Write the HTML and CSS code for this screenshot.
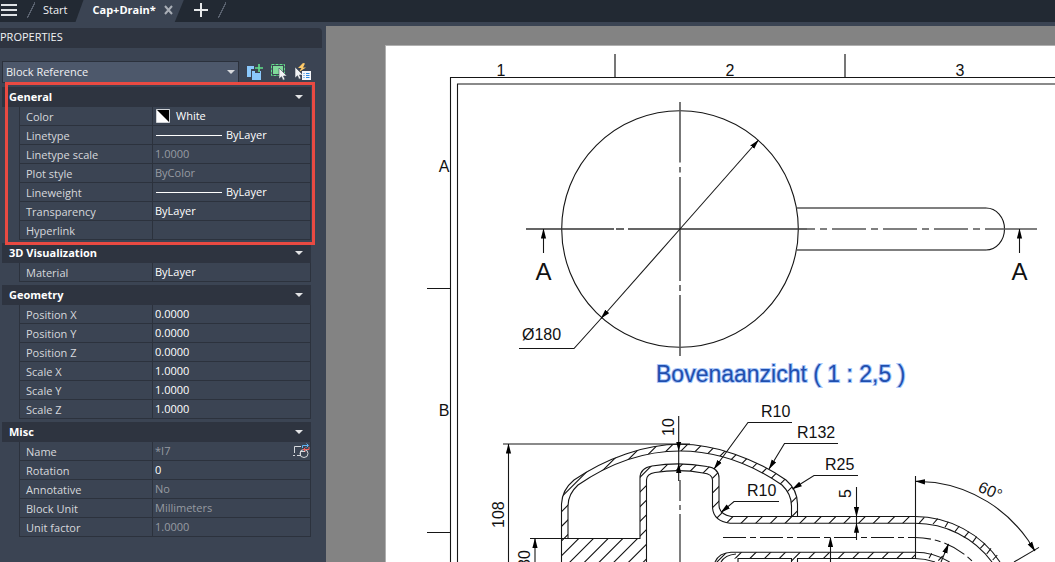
FILE: index.html
```html
<!DOCTYPE html>
<html lang="en">
<head>
<meta charset="utf-8">
<title>Cap+Drain</title>
<link rel="stylesheet" href="styles.css">
</head>
<body>
<header class="tabbar">
  <button class="menu-btn" aria-label="Menu"><svg width="17" height="14" viewBox="0 0 17 14"><path d="M1 2h16M1 7h16M1 12h16" stroke="#dfe2e6" stroke-width="2"/></svg></button>
  <span class="slash"></span>
  <button class="tab">Start</button>
  <div class="tab-active">
    <button class="tab-name">Cap+Drain*</button>
    <button class="tab-close" aria-label="Close tab"><svg width="10" height="10" viewBox="0 0 10 10"><path d="M1 1l7 8M8 1l-7 8" stroke="#a9aeb6" stroke-width="2"/></svg></button>
  </div>
  <button class="tab-add" aria-label="New tab"><svg width="14" height="14" viewBox="0 0 14 14"><path d="M0 7h14M7 0v14" stroke="#e6e8ea" stroke-width="2"/></svg></button>
  <span class="slash"></span>
</header>
<main class="workspace">
  <aside class="panel">
    <h1 class="panel-title">PROPERTIES</h1>
    <div class="toolbar">
      <div class="picker">
        <select class="picker-select" aria-label="Object type"><option>Block Reference</option></select>
        <svg class="picker-arrow" width="8" height="4" viewBox="0 0 8 4"><path d="M0 0h8l-4 4z" fill="#d8dadd"/></svg>
      </div>
      <button class="tool" aria-label="Toggle PICKADD"><svg width="18" height="18" viewBox="0 0 18 18"><path d="M1 3h7v3H5v8H1z" fill="#8ac8fb"/><path d="M6 8h3v2h5v-2h1v9H6z" fill="#8ac8fb"/><path d="M9 5h8M13 1v8" stroke="#62de8b" stroke-width="1.6"/></svg></button>
      <button class="tool" aria-label="Select objects"><svg width="18" height="18" viewBox="0 0 18 18"><path d="M1.500 1.500h13v11h-13z" fill="none" stroke="#62de8b" stroke-dasharray="3 1"/><path d="M3 3h10v8H3z" fill="#80d99a"/><path d="M9 5v11l2.500-2.300 1.500 3.500 2-.8-1.500-3.400H17z" fill="#f2f3f5" stroke="#3b4453" stroke-width=".6"/></svg></button>
      <button class="tool" aria-label="Quick select"><svg width="18" height="18" viewBox="0 0 18 18"><path d="M9 0L4 5h3.500L5 9l7-4.500H9l2-4z" fill="#ffca68"/><path d="M1 4v11l2.500-2.300 1.500 3.500 2-.8-1.500-3.400H9z" fill="#f2f3f5" stroke="#3b4453" stroke-width=".6"/><path d="M8 8h9v9H8z" fill="#f5f6f8"/><path d="M9.500 10.500h1M9.500 12.500h1M9.500 14.500h1M12 10.500h3.500M12 12.500h3.500M12 14.500h3.500" stroke="#2d8ae0"/></svg></button>
    </div>

    <section class="group highlighted">
      <h2 class="group-head"><button class="group-btn">General<svg width="8" height="4" viewBox="0 0 8 4"><path d="M0 0h8l-4 4z" fill="#e3e4e6"/></svg></button></h2>
      <table class="grid">
        <tr><th scope="row">Color</th><td><button class="value"><svg class="swatch" width="14" height="14" viewBox="0 0 14 14"><path d="M.5.500h13v13H.5z" fill="#fff" stroke="#cfd2d6"/><path d="M1 1h12v12z" fill="#000"/></svg>White</button></td></tr>
        <tr><th scope="row">Linetype</th><td><button class="value"><span class="stroke"></span>ByLayer</button></td></tr>
        <tr><th scope="row"><label for="lts">Linetype scale</label></th><td><input id="lts" class="value" value="1.0000" disabled></td></tr>
        <tr><th scope="row"><label for="plot">Plot style</label></th><td><input id="plot" class="value" value="ByColor" disabled></td></tr>
        <tr><th scope="row">Lineweight</th><td><button class="value"><span class="stroke"></span>ByLayer</button></td></tr>
        <tr><th scope="row"><label for="transp">Transparency</label></th><td><input id="transp" class="value" value="ByLayer"></td></tr>
        <tr><th scope="row"><label for="link">Hyperlink</label></th><td><input id="link" class="value" value=""></td></tr>
      </table>
    </section>

    <section class="group">
      <h2 class="group-head"><button class="group-btn">3D Visualization<svg width="8" height="4" viewBox="0 0 8 4"><path d="M0 0h8l-4 4z" fill="#e3e4e6"/></svg></button></h2>
      <table class="grid">
        <tr><th scope="row"><label for="mat">Material</label></th><td><select id="mat" class="value"><option>ByLayer</option></select></td></tr>
      </table>
    </section>

    <section class="group">
      <h2 class="group-head"><button class="group-btn">Geometry<svg width="8" height="4" viewBox="0 0 8 4"><path d="M0 0h8l-4 4z" fill="#e3e4e6"/></svg></button></h2>
      <table class="grid">
        <tr><th scope="row"><label for="px">Position X</label></th><td><input id="px" class="value" value="0.0000"></td></tr>
        <tr><th scope="row"><label for="py">Position Y</label></th><td><input id="py" class="value" value="0.0000"></td></tr>
        <tr><th scope="row"><label for="pz">Position Z</label></th><td><input id="pz" class="value" value="0.0000"></td></tr>
        <tr><th scope="row"><label for="sx">Scale X</label></th><td><input id="sx" class="value" value="1.0000"></td></tr>
        <tr><th scope="row"><label for="sy">Scale Y</label></th><td><input id="sy" class="value" value="1.0000"></td></tr>
        <tr><th scope="row"><label for="sz">Scale Z</label></th><td><input id="sz" class="value" value="1.0000"></td></tr>
      </table>
    </section>

    <section class="group">
      <h2 class="group-head"><button class="group-btn">Misc<svg width="8" height="4" viewBox="0 0 8 4"><path d="M0 0h8l-4 4z" fill="#e3e4e6"/></svg></button></h2>
      <table class="grid">
        <tr><th scope="row"><label for="nm">Name</label></th><td><div class="with-action"><input id="nm" class="value" value="*I7" disabled><button class="action" aria-label="Replace block"><svg width="17" height="16" viewBox="0 0 17 16"><path d="M8 3.500H1.500V10M0 12.500h2M4 12.500h4" fill="none" stroke="#d5d8dc"/><circle cx="11" cy="10.500" r="4" fill="none" stroke="#d5d8dc"/><path d="M7.500 12.500V8.500h4.500" fill="none" stroke="#d5d8dc"/><path d="M9.500 5V2.500H15M13.500.5l2 2-2 2" fill="none" stroke="#5fb4f2"/><path d="M16 4v2.500h-5.500M12.500 4.500l-2 2 2 2" fill="none" stroke="#f0605c"/></svg></button></div></td></tr>
        <tr><th scope="row"><label for="rot">Rotation</label></th><td><input id="rot" class="value" value="0"></td></tr>
        <tr><th scope="row"><label for="ann">Annotative</label></th><td><input id="ann" class="value" value="No" disabled></td></tr>
        <tr><th scope="row"><label for="bu">Block Unit</label></th><td><input id="bu" class="value" value="Millimeters" disabled></td></tr>
        <tr><th scope="row"><label for="uf">Unit factor</label></th><td><input id="uf" class="value" value="1.0000" disabled></td></tr>
      </table>
    </section>
  </aside>

  <div class="canvas">
    <div class="paper">
      <svg class="drawing" viewBox="386 46 669 516" preserveAspectRatio="xMinYMin slice">
        <defs>
          <clipPath id="walls">
            <path clip-rule="evenodd" d="M561.500 539V504Q562 490 574 480C606 458 645 444.300 680 444.300S754 458 786 480Q797.500 490 797.500 504V516.500H791.500V506Q791.500 494 782 485C750 463 715 451 680 451S610 463 578 485Q568 494 568 506V539z"/>
            <path d="M640 538.500V478Q640 468 652 466Q680 461.500 707 466.500Q719 468 719 478V505Q719 514 731 516.500H915V523.300H730Q712.500 521 712.500 507V479Q712 474 703 473Q680 468.500 655 472.500Q646.500 474 646.500 480V570H561.500V538.500z"/>
            <path d="M715 562Q718 553 731 552.300H915V558.500H797.500V570H791.500V558.500H738Q728 558 721 564z"/>
          </clipPath>
          <marker id="arrow" orient="auto" markerUnits="userSpaceOnUse" markerWidth="10" markerHeight="6" refX="9.500" refY="3" viewBox="0 0 10 6"><path d="M10 3L0 .4v5.200z" fill="#000"/></marker>
        </defs>

        <!-- sheet frame and zone ticks -->
        <g class="ln">
          <path d="M1060 77.500H450.500V570M1060 84H457.500V570"/>
          <path d="M427 288.500h23M427 532.500h23"/>
          <path class="soft" d="M615 54v23M845 54v23"/>
        </g>
        <g class="txt mid">
          <text x="501" y="76">1</text><text x="730" y="76">2</text><text x="960" y="76">3</text>
          <text x="444" y="172">A</text><text x="444" y="416">B</text>
        </g>

        <!-- top view -->
        <g class="ln">
          <circle cx="680" cy="229" r="118.300"/>
          <path class="soft" d="M796.500 208H986M796.500 250H986"/>
          <path d="M986 208a18.500 21 0 0 1 0 42"/>
          <path class="soft" d="M680 102v60.500M680 167v5.500M680 177v104M680 285v6M680 295v61"/>
          <path class="soft dark" d="M526 229h88M616 229h8M628 229h179"/>
          <path class="soft" d="M807 229h8M820 229h7M832 229h34M871 229h7M883 229h34M922 229h7M934 229h34M973 229h7M985 229h52"/>
          <path d="M519 348.500h55L601.500 318"/>
          <path d="M680 229L758.500 140" marker-end="url(#arrow)"/>
          <path d="M680 229L601 318.500" marker-end="url(#arrow)"/>
          <path d="M543.500 253V229" marker-end="url(#arrow)"/>
          <path d="M1019.500 253V229" marker-end="url(#arrow)"/>
        </g>
        <g class="txt"><text x="522" y="340">Ø180</text></g>
        <g class="txt mid big"><text x="543.500" y="280">A</text><text x="1019.500" y="280">A</text></g>
        <text class="view-title" x="656" y="382">Bovenaanzicht ( 1 : 2,5 )</text>

        <!-- section view: hatched walls -->
        <g clip-path="url(#walls)">
          <path d="M499.450 499.450L960 960M499.450 499.450" fill="none" stroke="#111" stroke-width="1200" stroke-dasharray="1.1 9.294"/>
        </g>
        <g class="ln">
          <path d="M561.500 562V504Q562 490 574 480C606 458 645 444.300 680 444.300S754 458 786 480Q797.500 490 797.500 504V516.500"/>
          <path d="M568 538.500V506Q568 494 578 485C610 463 645 451 680 451S750 463 782 485Q791.500 494 791.500 506V516.500"/>
          <path d="M530 538.500H640V478Q640 468 652 466Q680 461.500 707 466.500Q719 468 719 478V505Q719 514 731 516.500H915A102.500 102.500 0 0 1 1000 562"/>
          <path d="M646.500 562V480Q646.500 474 655 472.500Q680 468.500 703 473Q712.500 474 712.500 480V507Q713 521 730 523.300H915A95.700 95.700 0 0 1 992 562"/>
          <path d="M715 562Q719 553 731 552.300H915A66.700 66.700 0 0 1 949.600 562"/>
          <path d="M721 562Q725 555 736 554M738 562V558.500H791.500V562M797.500 562V558.500H915A60.500 60.500 0 0 1 935 562"/>
          <path d="M919 523.300l5.300-6M933 524l4.700-5.300M945 527.300l3.300-5.600M955 531.700l4.300-5.700M964 537.700l5-6M972.300 542.700l4.400-6M980.300 548.300l4.700-5M986.700 554l4.300-5.700M992.700 560l4.600-5M929 558.300l2.700-5M938.300 560.700l4.400-4.700"/>
          <path d="M680 480v21M680 505v5M680 514v48"/>
          <path stroke-dasharray="23 4 6 4" d="M723 537.500H915A81.500 81.500 0 0 1 972 561"/>
        </g>

        <!-- dimensions -->
        <g class="ln">
          <path d="M503 444H690M508.500 562V444" marker-end="url(#arrow)"/>
          <path d="M535 562V538.500" marker-end="url(#arrow)"/>
          <path d="M678.700 416V451" marker-end="url(#arrow)"/>
          <path d="M678.700 451V463.500M678.700 481V463.500" marker-end="url(#arrow)"/>
          <path d="M792 422.500H748L714 469" marker-end="url(#arrow)"/>
          <path d="M838 443.500H784.500L769 469" marker-end="url(#arrow)"/>
          <path d="M858 475.500H814L792.500 489" marker-end="url(#arrow)"/>
          <path d="M779 501.500H734L721 512.500" marker-end="url(#arrow)"/>
          <path d="M856.500 487V516.500" marker-end="url(#arrow)"/>
          <path d="M856.500 516V540M856.500 540V523.300" marker-end="url(#arrow)"/>
          <path d="M830.500 562V537.500" marker-end="url(#arrow)"/>
          <path d="M941 562L948.500 544" marker-end="url(#arrow)"/>
          <path d="M915.500 476V558.500M1014 562L1039 547.400"/>
          <path d="M935 482.500A138 138 0 0 1 1028 540L1035 551" marker-end="url(#arrow)"/>
          <path d="M935 482.500L915.500 481.300" marker-end="url(#arrow)"/>
        </g>
        <g class="txt">
          <text transform="translate(503.500 528) rotate(-90)">108</text>
          <text transform="translate(529.500 568) rotate(-90)">80</text>
          <text transform="translate(673.500 436) rotate(-90)">10</text>
          <text transform="translate(850.500 498) rotate(-90)">5</text>
          <text x="761" y="417">R10</text>
          <text x="797" y="438">R132</text>
          <text x="825" y="470">R25</text>
          <text x="747" y="496">R10</text>
          <text transform="translate(977 491) rotate(24)">60°</text>
        </g>
      </svg>
    </div>
  </div>
</main>
</body>
</html>
```

FILE: styles.css
```css
* { box-sizing: border-box; }
body {
  margin: 0;
  min-height: 100vh;
  display: flex;
  flex-direction: column;
  overflow: hidden;
  background: #3b4453;
  color: #e2e4e7;
  font: 11px/18px "Open Sans", "Noto Sans", sans-serif;
}
button, input, select {
  font: inherit;
  color: inherit;
  background: none;
  border: 0;
  padding: 0;
  margin: 0;
  appearance: none;
  text-align: left;
}
svg { display: block; flex: none; }

/* document tabs */
.tabbar {
  display: flex;
  align-items: center;
  height: 22px;
  padding-bottom: 2px;
  background: #222933;
}
.menu-btn { width: 27px; }
.slash {
  width: 8px;
  height: 16px;
  background: linear-gradient(116deg, transparent 46%, #59616e 46%, #59616e 56%, transparent 56%);
}
.tab { padding: 0 8px; color: #f0f1f3; }
.tab-active {
  display: flex;
  align-items: center;
  gap: 8px;
  height: 22px;
  margin-bottom: -2px;
  padding: 0 10px 2px 17px;
  background: #3b4453;
  clip-path: polygon(8px 0, 100% 0, calc(100% - 9px) 100%, 0 100%);
}
.tab-name { font-weight: 700; color: #fff; }
.tab-add { margin: 0 10px; }

/* workspace */
.workspace { flex: 1; display: flex; min-height: 0; }
.panel { flex: 0 0 326px; padding-top: 6px; }
.panel-title {
  margin: 0 4px 13px 0;
  height: 20px;
  line-height: 18px;
  font-size: 11px;
  font-weight: 400;
  color: #f0f1f3;
  background: #2e3440;
  border-radius: 0 4px 0 0;
}
.toolbar {
  display: flex;
  align-items: center;
  gap: 6px;
  margin: 0 14px 4px 2px;
}
.picker {
  flex: 1;
  display: flex;
  align-items: center;
  height: 22px;
  margin-right: 1px;
  padding: 0 3px;
  background: #4d586b;
  border: 1px solid #2b313c;
}
.picker-select { flex: 1; color: #f0f1f3; }
.tool { width: 18px; }

.group { position: relative; margin: 0 15px 3px 2px; }
.highlighted::after {
  content: "";
  position: absolute;
  z-index: 1;
  inset: -5px -4px -5px 3px;
  border: 3px solid #e94a42;
  pointer-events: none;
}
.group-head { margin: 0; height: 20px; background: #2e3440; }
.group-btn {
  display: flex;
  align-items: center;
  justify-content: space-between;
  width: 100%;
  height: 20px;
  padding: 0 8px 0 7px;
  font-size: 11px;
  font-weight: 700;
  color: #fff;
}
.grid {
  width: calc(100% - 17px);
  margin-left: 17px;
  border-collapse: separate;
  border-spacing: 0;
  border-left: 1px solid #2c323d;
  table-layout: fixed;
}
.grid th, .grid td {
  height: 19px;
  padding: 0;
  border-bottom: 1px solid #2c323d;
  border-right: 1px solid #2c323d;
}
.grid th {
  width: 133px;
  padding: 2px 0 0 6px;
  line-height: 16px;
  font-weight: 400;
  text-align: left;
  color: #d6d8dc;
}
.value {
  display: flex;
  align-items: center;
  width: 100%;
  height: 18px;
  padding-left: 2px;
  color: #fff;
}
.value:disabled { color: #979ba2; opacity: 1; }
.swatch { margin: 0 6px 0 1px; }
.stroke { width: 66px; height: 1px; margin: 0 4px 0 1px; background: #fff; }
.with-action { display: flex; }
.action { flex: none; }

/* drawing area */
.canvas {
  flex: 1;
  display: flex;
  margin-top: 4px;
  padding: 19px 0 0 59px;
  background: #838383;
  min-width: 0;
}
.paper {
  flex: 1;
  background: #fff;
  border: solid #b0b0b0;
  border-width: 1px 0 0 1px;
  min-width: 0;
  min-height: 0;
}
.drawing { width: 100%; height: 100%; }
.ln { fill: none; stroke: #161616; stroke-width: 1.1; }
.soft { stroke: #555; stroke-width: 1.6; }
.dark { stroke: #333; }
.txt { font: 16px "Liberation Sans", Arial, sans-serif; fill: #111; }
.mid { text-anchor: middle; }
.big { font-size: 24px; }
.view-title {
  font: 23px "Liberation Sans", Arial, sans-serif;
  fill: #1f4fae;
  stroke: #a9c7fa;
  stroke-width: 2;
  paint-order: stroke;
}
```
